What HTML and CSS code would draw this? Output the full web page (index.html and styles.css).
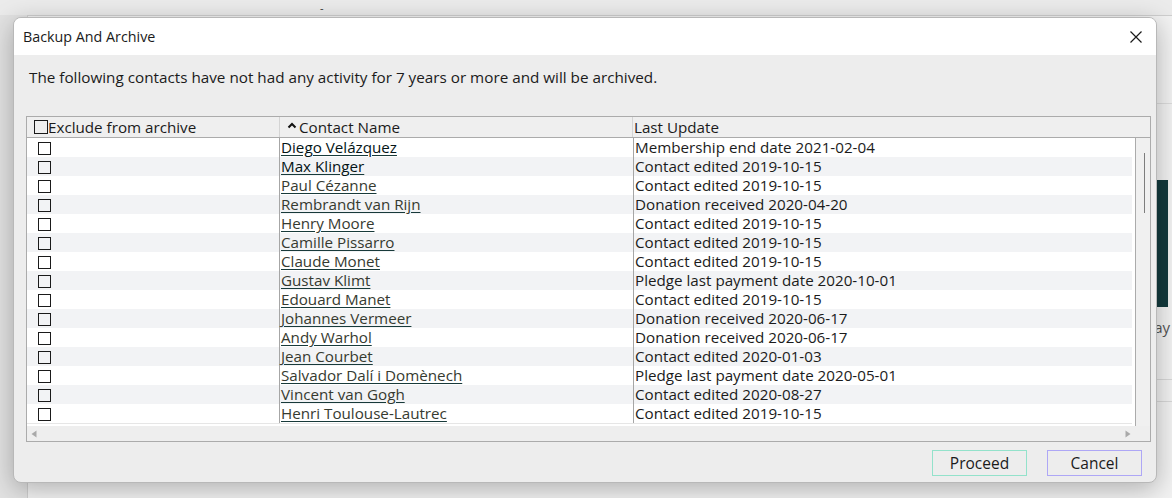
FILE: index.html
```html
<!DOCTYPE html>
<html>
<head>
  <title>Backup And Archive</title>
  <meta name="viewport" content="width=device-width, initial-scale=1.0">
  <link rel="stylesheet" href="styles.css">
</head>
<body>
  <div class="topbar"><span class="dash">-</span></div>
  <div class="app">
    <div class="app-side">
      <div class="side-head"></div>
      <div class="side-btn"></div>
      <div class="side-label">Pay</div>
      <div class="side-line"></div>
      <div class="side-line second"></div>
    </div>
  </div>

  <div class="dialog">
    <div class="titlebar">
      <span class="title">Backup And Archive</span>
      <svg class="close" width="12" height="12" viewBox="0 0 12 12">
        <path d="M0.5 0.5 L11.5 11.5 M11.5 0.5 L0.5 11.5" stroke="#1a1a1a" stroke-width="1.2" fill="none"/>
      </svg>
    </div>

    <div class="content">
      <p class="message">The following contacts have not had any activity for 7 years or more and will be archived.</p>

      <div class="grid">
        <div class="grid-head">
          <div class="hcell c1"><span class="box head-box"></span>Exclude from archive</div>
          <div class="hcell c2">
            <svg class="caret" width="10" height="7" viewBox="0 0 10 7">
              <path d="M1.5 5.5 L5 2 L8.5 5.5" stroke="#111" stroke-width="2" fill="none"/>
            </svg>Contact Name
          </div>
          <div class="hcell c3">Last Update</div>
        </div>

        <div class="grid-mid">
          <div class="rows">
            <div class="row"><div class="cell c1"><span class="box"></span></div><div class="cell c2"><a class="name seen">Diego Velázquez</a></div><div class="cell c3">Membership end date 2021-02-04</div></div>
            <div class="row"><div class="cell c1"><span class="box"></span></div><div class="cell c2"><a class="name seen">Max Klinger</a></div><div class="cell c3">Contact edited 2019-10-15</div></div>
            <div class="row"><div class="cell c1"><span class="box"></span></div><div class="cell c2"><a class="name">Paul Cézanne</a></div><div class="cell c3">Contact edited 2019-10-15</div></div>
            <div class="row"><div class="cell c1"><span class="box"></span></div><div class="cell c2"><a class="name">Rembrandt van Rijn</a></div><div class="cell c3">Donation received 2020-04-20</div></div>
            <div class="row"><div class="cell c1"><span class="box"></span></div><div class="cell c2"><a class="name">Henry Moore</a></div><div class="cell c3">Contact edited 2019-10-15</div></div>
            <div class="row"><div class="cell c1"><span class="box"></span></div><div class="cell c2"><a class="name">Camille Pissarro</a></div><div class="cell c3">Contact edited 2019-10-15</div></div>
            <div class="row"><div class="cell c1"><span class="box"></span></div><div class="cell c2"><a class="name">Claude Monet</a></div><div class="cell c3">Contact edited 2019-10-15</div></div>
            <div class="row"><div class="cell c1"><span class="box"></span></div><div class="cell c2"><a class="name">Gustav Klimt</a></div><div class="cell c3">Pledge last payment date 2020-10-01</div></div>
            <div class="row"><div class="cell c1"><span class="box"></span></div><div class="cell c2"><a class="name">Edouard Manet</a></div><div class="cell c3">Contact edited 2019-10-15</div></div>
            <div class="row"><div class="cell c1"><span class="box"></span></div><div class="cell c2"><a class="name">Johannes Vermeer</a></div><div class="cell c3">Donation received 2020-06-17</div></div>
            <div class="row"><div class="cell c1"><span class="box"></span></div><div class="cell c2"><a class="name">Andy Warhol</a></div><div class="cell c3">Donation received 2020-06-17</div></div>
            <div class="row"><div class="cell c1"><span class="box"></span></div><div class="cell c2"><a class="name">Jean Courbet</a></div><div class="cell c3">Contact edited 2020-01-03</div></div>
            <div class="row"><div class="cell c1"><span class="box"></span></div><div class="cell c2"><a class="name">Salvador Dalí i Domènech</a></div><div class="cell c3">Pledge last payment date 2020-05-01</div></div>
            <div class="row"><div class="cell c1"><span class="box"></span></div><div class="cell c2"><a class="name">Vincent van Gogh</a></div><div class="cell c3">Contact edited 2020-08-27</div></div>
            <div class="row"><div class="cell c1"><span class="box"></span></div><div class="cell c2"><a class="name">Henri Toulouse-Lautrec</a></div><div class="cell c3">Contact edited 2019-10-15</div></div>
          </div>
          <div class="vscroll"><div class="thumb"></div></div>
        </div>

        <div class="hscroll">
          <svg width="6" height="8" viewBox="0 0 6 8"><path d="M5.5 0.5 L0.5 4 L5.5 7.5 Z" fill="#a9a9a9"/></svg>
          <svg width="6" height="8" viewBox="0 0 6 8"><path d="M0.5 0.5 L5.5 4 L0.5 7.5 Z" fill="#a9a9a9"/></svg>
        </div>
      </div>

      <div class="actions">
        <button class="btn proceed">Proceed</button>
        <button class="btn cancel">Cancel</button>
      </div>
    </div>
  </div>
</body>
</html>
```

FILE: styles.css
```css
body {
  margin: 0;
  height: 498px;
  overflow: hidden;
  background: #e2e2e2;
  font-family: "Open Sans", "Noto Sans", sans-serif;
}

.topbar {
  height: 15px;
  background: #ebebeb;
  font-size: 11px;
  line-height: 15px;
}

.dash {
  display: inline-block;
  margin-left: 320px;
  color: #333;
}

.app {
  margin-left: 27px;
  height: 482px;
  background: #f2f2f2;
  border-top: 1px solid #cfcfcf;
  border-left: 1px solid #cfcfcf;
  display: flex;
  justify-content: flex-end;
}

.app-side {
  width: 70px;
  display: flex;
  flex-direction: column;
  align-items: flex-end;
}

.side-head {
  width: 100%;
  height: 87px;
  border-bottom: 1px solid #dcdcdc;
}

.side-btn {
  margin-top: 76px;
  margin-right: 4px;
  width: 60px;
  height: 127px;
  background: #133a3d;
}

.side-label {
  margin-top: 10px;
  margin-right: 2px;
  font-size: 15px;
  line-height: 20px;
  color: #555;
}

.side-line {
  width: 100%;
  margin-top: 42px;
  border-top: 1px solid #d8d8d8;
}

.side-line.second {
  margin-top: 21px;
}

/* dialog */

.dialog {
  position: absolute;
  left: 13px;
  top: 17px;
  width: 1144px;
  height: 466px;
  box-sizing: border-box;
  border: 1px solid #b8b8b8;
  border-radius: 8px;
  background: #ededed;
  overflow: hidden;
  display: flex;
  flex-direction: column;
  box-shadow: 0 6px 26px rgba(0, 0, 0, 0.28);
  color: #1b1b1b;
}

.titlebar {
  height: 37px;
  flex-shrink: 0;
  background: #fff;
  display: flex;
  align-items: center;
  justify-content: space-between;
  padding: 0 14px 0 9px;
}

.title {
  font-size: 14.3px;
  color: #1a1a1a;
}

.content {
  flex: 1;
  display: flex;
  flex-direction: column;
  padding: 0 5px 6px 12px;
}

.message {
  margin: 12px 0 0 3px;
  font-size: 15.25px;
  line-height: 20px;
}

.grid {
  margin-top: 29px;
  height: 326px;
  box-sizing: border-box;
  border: 1px solid #ababab;
  display: flex;
  flex-direction: column;
  font-size: 15.2px;
}

.grid-head {
  display: flex;
  height: 20px;
  line-height: 20px;
  border-bottom: 1px solid #ababab;
  background: #efefef;
  flex-shrink: 0;
}

.c1 {
  width: 252px;
  flex-shrink: 0;
  display: flex;
  align-items: center;
}

.c2 {
  width: 352px;
  flex-shrink: 0;
  border-left: 1px solid #a6a6a6;
  white-space: nowrap;
}

.c3 {
  flex: 1;
  border-left: 1px solid #a6a6a6;
  white-space: nowrap;
}

.hcell.c1 {
  padding-left: 7px;
  box-sizing: border-box;
}

.hcell.c2 {
  border-left-color: #d4d4d4;
  padding-left: 7px;
  width: 345px;
  display: flex;
  align-items: center;
}

.hcell.c3 {
  border-left-color: #d4d4d4;
  padding-left: 1px;
}

.caret {
  margin-right: 2px;
  margin-top: -3px;
}

.box {
  display: inline-block;
  width: 13px;
  height: 13px;
  box-sizing: border-box;
  border: 1px solid #1a1a1a;
}

.head-box {
  width: 14px;
  height: 14px;
}

.grid-mid {
  flex: 1;
  display: flex;
}

.rows {
  flex: 1;
  background: #fff;
  padding-right: 3px;
  border-right: 1px solid #ababab;
}

.row {
  display: flex;
  height: 19px;
  line-height: 19px;
}

.row:nth-child(even) {
  background: #f2f3f5;
}

.row:last-child {
  box-shadow: 0 1px 0 #e6e6e6;
}

.cell.c1 {
  padding-left: 11px;
  box-sizing: border-box;
  padding-top: 1px;
}

.cell.c2 {
  padding-left: 1px;
}

.cell.c3 {
  padding-left: 1px;
}

.name {
  color: #363a30;
  text-decoration: underline;
  text-decoration-color: #183a3a;
  text-underline-offset: 2px;
}

.name.seen {
  color: #041416;
  font-weight: 500;
}

.vscroll {
  width: 14px;
  background: #f0f0f0;
}

.thumb {
  margin: 15px 0 0 8px;
  width: 1px;
  height: 60px;
  background: #7d7d7d;
}

.hscroll {
  height: 15px;
  flex-shrink: 0;
  display: flex;
  align-items: center;
  justify-content: space-between;
  padding: 0 19px 0 4px;
  background: #eeeeee;
}

.actions {
  display: flex;
  justify-content: flex-end;
  gap: 20px;
  margin-top: 8px;
  padding-right: 9px;
}

.btn {
  width: 95px;
  height: 26px;
  background: #ededed;
  font-family: "Open Sans", "Noto Sans", sans-serif;
  font-size: 15.5px;
  color: #1b1b1b;
  padding: 0;
}

.proceed {
  border: 1px solid #93e2cb;
}

.cancel {
  border: 1px solid #aea7f6;
}
```
